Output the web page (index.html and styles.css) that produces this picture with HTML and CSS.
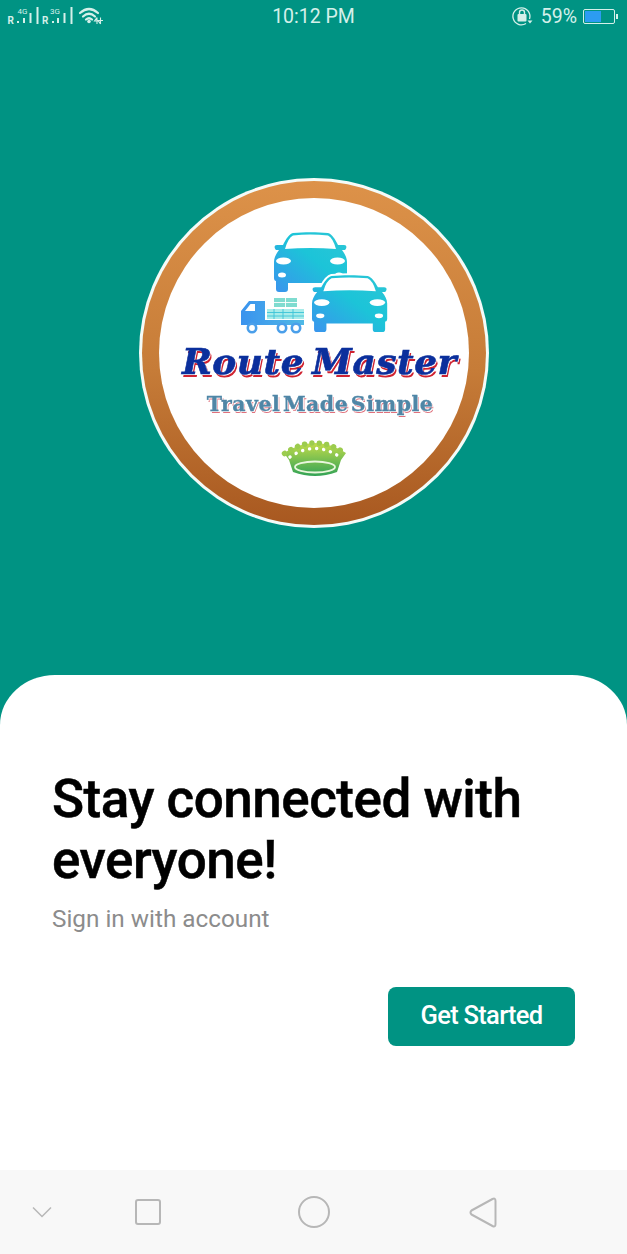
FILE: index.html
```html
<!DOCTYPE html>
<html lang="en">
<head>
<meta charset="utf-8">
<title>Route Master</title>
<link rel="stylesheet" href="styles.css">
</head>
<body>
<div class="screen">
  <header class="status">
    <svg class="status-signal" width="105" height="32" viewBox="0 0 105 32" fill="none">
      <g fill="#d5f0ea" font-family="Roboto, sans-serif">
        <text x="7.500" y="23.500" font-size="10" font-weight="700">R</text>
        <text x="17.500" y="14" font-size="8">4G</text>
        <text x="42" y="23.500" font-size="10" font-weight="700">R</text>
        <text x="50" y="14" font-size="8">3G</text>
        <rect x="17" y="21" width="2" height="2"/>
        <rect x="23" y="18" width="2" height="5"/>
        <rect x="29.500" y="13" width="2" height="10"/>
        <rect x="36.500" y="7" width="2" height="17"/>
        <rect x="52" y="21" width="2" height="2"/>
        <rect x="57" y="18" width="2" height="5"/>
        <rect x="63.500" y="13" width="2" height="10"/>
        <rect x="70.500" y="7" width="2" height="17"/>
        <circle cx="89" cy="21.500" r="1.800"/>
      </g>
      <g stroke="#d5f0ea" stroke-width="2.200" stroke-linecap="round">
        <path d="M80 13 Q89 5 98 13"/>
        <path d="M83 16.500 Q89 11 95 16.500"/>
        <path d="M86 19.500 Q89 17 92 19.500"/>
      </g>
      <path d="M97 17.500v6.500M97 17.500l-2.500 3.500h5M100.500 24v-6.500M100.500 24l-2.500-3.500h5" stroke="#d5f0ea" stroke-width="1.100"/>
    </svg>
    <span class="status-time">10:12 PM</span>
    <div class="status-right">
      <svg width="22" height="22" viewBox="0 0 22 22" fill="none">
        <path d="M18.500 14A8.500 8.500 0 1 0 15 18.500" stroke="#d5f0ea" stroke-width="1.300"/>
        <path d="M16.500 15.500h5l-2.500 3z" fill="#d5f0ea"/>
        <rect x="6.500" y="9" width="9" height="7.500" rx="1" fill="#d5f0ea"/>
        <path d="M8.500 9V7.500a2.500 2.500 0 0 1 5 0V9" stroke="#d5f0ea" stroke-width="1.400"/>
      </svg>
      <span class="status-pct">59%</span>
      <div class="battery"><div class="battery-fill"></div></div>
      <div class="battery-tip"></div>
    </div>
  </header>

  <div class="logo">
    <div class="logo-ring">
      <div class="logo-face">
        <svg class="vehicles" width="150" height="104" viewBox="0 0 150 104" fill="none">
          <defs>
            <linearGradient id="carFill" x1="0" y1="1" x2="1" y2="0">
              <stop offset="0" stop-color="#3a93ee"/>
              <stop offset="0.55" stop-color="#1cc4d8"/>
              <stop offset="1" stop-color="#2cc6d6"/>
            </linearGradient>
            <linearGradient id="truckFill" x1="0" y1="0" x2="1" y2="0">
              <stop offset="0" stop-color="#3a93ee"/>
              <stop offset="1" stop-color="#4fb9e6"/>
            </linearGradient>
            <path id="carBody" d="M19 1C30 0 43 0 54 1C58 2 61 7 64 13H70C73 13 73 16 71 18H68C71 22 73 26 73 30V46C73 48 72 49 71 49V57Q71 60 68 60H62Q59 60 59 57V51H14V57Q14 60 11 60H5Q2 60 2 57V49C1 49 0 48 0 46V30C0 26 2 22 5 18H2C0 16 0 13 3 13H9C12 7 15 2 19 1Z"/>
            <g id="carDetails" fill="#fff">
              <path d="M11 17Q14 6 19 3.500Q36 1.500 54 3.500Q59 6 62 17Q36 15 11 17Z"/>
              <ellipse cx="9.500" cy="29" rx="7.500" ry="3.500"/>
              <ellipse cx="63.500" cy="29" rx="7.500" ry="3.500"/>
              <ellipse cx="8" cy="43" rx="4" ry="2.500"/>
              <ellipse cx="65" cy="43" rx="4" ry="2.500"/>
            </g>
            <linearGradient id="crownFill" x1="0" y1="0" x2="0" y2="1">
              <stop offset="0" stop-color="#c3dc4a"/>
              <stop offset="1" stop-color="#32a356"/>
            </linearGradient>
          </defs>
          <use href="#carBody" x="34" y="2" fill="url(#carFill)"/>
          <use href="#carDetails" x="34" y="2"/>
          <g transform="translate(72 45) scale(1.030 0.950)">
            <use href="#carBody" fill="#fff" stroke="#fff" stroke-width="4"/>
            <use href="#carBody" fill="url(#carFill)"/>
            <use href="#carDetails"/>
          </g>
          <g transform="translate(1 68)">
            <path d="M0 27V13L8 3H24V22H63V27Z" fill="url(#truckFill)"/>
            <path d="M4 13L9.500 6H14V13Z" fill="#fff"/>
            <path d="M26 11H63V21H26Z" fill="#a8ecea"/>
            <path d="M26 14.500H63M26 18H63M33 11V21M42 11V21M52 11V21" stroke="#3cc4d8" stroke-width="0.900"/>
            <path d="M33 0H56V9H33Z" fill="#7fdcd0"/>
            <path d="M44.500 0V9M33 4.500H56" stroke="#fff" stroke-width="0.900"/>
            <g fill="#fff" stroke="#4a9fea" stroke-width="2.600">
              <circle cx="11" cy="30" r="4.200"/>
              <circle cx="41" cy="30" r="4.200"/>
              <circle cx="55" cy="30" r="4.200"/>
            </g>
          </g>
        </svg>
        <div class="brand">Route Master</div>
        <div class="tagline">Travel Made Simple</div>
        <svg class="crown" width="68" height="38" viewBox="0 0 68 38" fill="none">
          <path d="M3 14Q34 -6 65 14L60 21L56 33Q34 41 12 33L8 21Z" fill="url(#crownFill)"/>
          <path d="M3.500 14.500Q34 -6.500 64.500 14.500" stroke="#9ccc4e" stroke-width="5.500" stroke-linecap="round" stroke-dasharray="0.100 7.300"/>
          <path d="M9 18Q34 1 59 18" stroke="#fff" stroke-width="3.400" stroke-linecap="round" stroke-dasharray="0.100 7"/>
          <ellipse cx="34" cy="28" rx="20" ry="5.500" stroke="#e8f6dc" stroke-width="1.800"/>
        </svg>
      </div>
    </div>
  </div>

  <main class="sheet">
    <h1 class="title">Stay connected with everyone!</h1>
    <p class="subtitle">Sign in with account</p>
    <div class="actions">
      <button class="cta" type="button">Get Started</button>
    </div>
  </main>

  <nav class="navbar">
    <svg class="nav-chevron" width="20" height="12" viewBox="0 0 20 12" fill="none">
      <path d="M1 1.500L10 10.500L19 1.500" stroke="#b7b7b7" stroke-width="1.500"/>
    </svg>
    <svg class="nav-square" width="26" height="26" viewBox="0 0 26 26" fill="none">
      <rect x="1" y="1" width="24" height="24" rx="2" stroke="#b7b7b7" stroke-width="2"/>
    </svg>
    <svg class="nav-circle" width="32" height="32" viewBox="0 0 32 32" fill="none">
      <circle cx="16" cy="16" r="15" stroke="#b7b7b7" stroke-width="2"/>
    </svg>
    <svg class="nav-back" width="28" height="31" viewBox="0 0 28 31" fill="none">
      <path d="M23.500 2Q26.500 0.500 26.500 4V27Q26.500 30.500 23.500 29L2.500 17.500Q0.500 15.500 2.500 13.500Z" stroke="#b7b7b7" stroke-width="2" stroke-linejoin="round"/>
    </svg>
  </nav>
</div>
</body>
</html>
```

FILE: styles.css
```css
* { box-sizing: border-box; }

html, body {
  margin: 0;
  padding: 0;
}

body {
  font-family: Roboto, "Liberation Sans", sans-serif;
}

.screen {
  width: 627px;
  height: 1254px;
  background: #009383;
  display: flex;
  flex-direction: column;
  overflow: hidden;
}

/* status bar */
.status {
  height: 32px;
  flex: none;
  display: grid;
  grid-template-columns: 1fr auto 1fr;
  align-items: center;
  color: #d5f0ea;
}

.status-signal { display: block; }

.status-time {
  font-size: 19.500px;
  padding-top: 1px;
}

.status-right {
  display: flex;
  align-items: center;
  justify-content: flex-end;
  padding-right: 9px;
}

.status-pct {
  font-size: 19.500px;
  margin-left: 8px;
  margin-right: 6px;
}

.battery {
  width: 32px;
  height: 15px;
  border: 1.500px solid #d5f0ea;
  border-radius: 2px;
  padding: 1px;
}

.battery-fill {
  width: 58%;
  height: 100%;
  background: #2c9cf2;
}

.battery-tip {
  width: 2px;
  height: 5px;
  margin-left: 1px;
  background: #d5f0ea;
}

/* logo */
.logo {
  width: 350px;
  height: 350px;
  flex: none;
  margin: 146px 0 0 139px;
  padding: 3px;
  border-radius: 50%;
  background: #f4fbf8;
}

.logo-ring {
  width: 100%;
  height: 100%;
  padding: 17px;
  border-radius: 50%;
  background: linear-gradient(180deg, #dd9249 0%, #c67c38 55%, #a85820 100%);
}

.logo-face {
  width: 100%;
  height: 100%;
  border-radius: 50%;
  background: #fff;
  display: flex;
  flex-direction: column;
  align-items: center;
  padding-top: 32px;
  filter: blur(0.400px);
}

.vehicles {
  flex: none;
  display: block;
  margin-left: 2px;
}

.brand {
  font-family: "DejaVu Serif", "Liberation Serif", serif;
  font-weight: 700;
  font-style: italic;
  font-size: 36px;
  line-height: 40px;
  letter-spacing: 0.500px;
  word-spacing: -5px;
  margin: 7px 0 0 11px;
  color: #0b2f9c;
  white-space: nowrap;
  -webkit-text-stroke: 0.600px #0b2f9c;
  text-shadow: 1px 1px 0 #fff, 2px 3px 0 #cf2230;
}

.tagline {
  font-family: "DejaVu Serif", "Liberation Serif", serif;
  font-weight: 700;
  font-size: 20.500px;
  line-height: 24px;
  letter-spacing: 0.500px;
  word-spacing: -5px;
  margin: 11px 0 0 12px;
  color: #4f86a6;
  white-space: nowrap;
  -webkit-text-stroke: 0.300px #4f86a6;
  text-shadow: 1px 1px 0 #fff, 1.500px 2px 0 #e0707c;
}

.crown {
  flex: none;
  display: block;
  margin: 23px 0 0 2px;
}

/* bottom sheet */
.sheet {
  flex: 1;
  margin-top: 147px;
  padding: 94px 52px 0;
  background: #fff;
  border-radius: 55px 55px 0 0 / 50px 50px 0 0;
}

.title {
  margin: 0;
  font-size: 53px;
  font-weight: 500;
  line-height: 61px;
  letter-spacing: -0.500px;
  color: #000;
  -webkit-text-stroke: 0.500px #000;
}

.subtitle {
  margin: 12px 0 0;
  font-size: 24.300px;
  line-height: 32px;
  color: #8c8c8c;
}

.actions {
  display: flex;
  justify-content: flex-end;
  margin-top: 52px;
}

.cta {
  width: 187px;
  height: 59px;
  border: 0;
  border-radius: 8px;
  padding: 0 0 4px;
  background: #009383;
  color: #fff;
  font-family: inherit;
  font-size: 25.500px;
  font-weight: 500;
  letter-spacing: -0.700px;
}

/* navigation bar */
.navbar {
  height: 84px;
  flex: none;
  display: flex;
  align-items: center;
  padding-left: 32px;
  background: #f8f8f8;
}

.navbar svg { display: block; flex: none; }

.nav-square { margin-left: 83px; }
.nav-circle { margin-left: 137px; }
.nav-back { margin-left: 139px; }
```
